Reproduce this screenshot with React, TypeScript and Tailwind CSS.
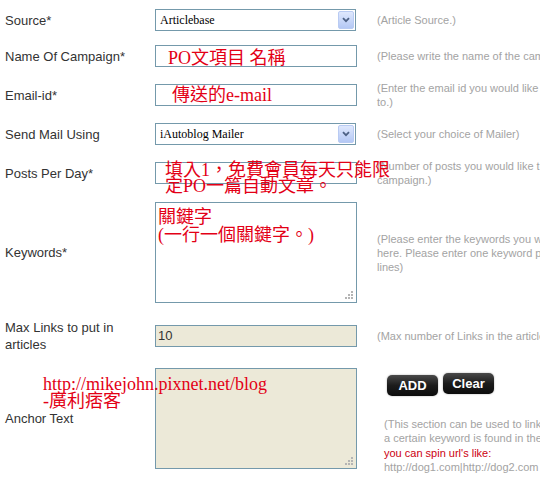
import React from "react";

const labelCls =
  "w-[155px] shrink-0 pl-[5px] pr-[20px] text-[13px] leading-[17px] text-[#333333]";
const helpCls =
  "ml-[20px] shrink-0 whitespace-nowrap text-[11px] leading-[14px] text-[#a3a3a3]";
const boxBorder = "border border-[#7499ab]";
const redCls =
  "absolute whitespace-nowrap text-[18px] text-[#e30016] pointer-events-none";
const redFont = { fontFamily: '"Liberation Serif", "Noto Sans CJK TC", serif' };

function Grip() {
  return (
    <svg
      className="absolute bottom-[2px] right-[2px]"
      width="10"
      height="10"
      viewBox="0 0 10 10"
    >
      {[
        [8, 2],
        [5, 5],
        [8, 5],
        [2, 8],
        [5, 8],
        [8, 8],
      ].map(([x, y], i) => (
        <rect key={i} x={x - 1} y={y - 1} width="2" height="2" fill="#b4b4b4" />
      ))}
    </svg>
  );
}

function SelectBox({ value }: { value: string }) {
  return (
    <div
      className={`relative flex h-[22px] w-[201px] shrink-0 items-center bg-white ${boxBorder}`}
    >
      <span
        className="pl-[4px] text-[12px] text-black"
        style={{ fontFamily: '"Liberation Serif", serif' }}
      >
        {value}
      </span>
      <div className="absolute right-[1px] top-[1px] flex h-[18px] w-[16px] items-center justify-center rounded-[2px] border border-[#b9cbf3] bg-gradient-to-b from-[#dfe8fd] to-[#b4c8f5]">
        <svg width="8" height="6" viewBox="0 0 8 6">
          <path
            d="M1 1.2 L4 4.2 L7 1.2"
            fill="none"
            stroke="#4d6185"
            strokeWidth="1.8"
          />
        </svg>
      </div>
    </div>
  );
}

function TextBox({ value, bg = "bg-white" }: { value?: string; bg?: string }) {
  return (
    <div className={`flex h-[22px] w-[202px] shrink-0 items-center ${bg} ${boxBorder}`}>
      {value && (
        <span
          className="pl-[2px] text-[13px] text-[#333333]"
          style={{ fontFamily: '"Liberation Sans", Arial, sans-serif' }}
        >
          {value}
        </span>
      )}
    </div>
  );
}

function TextArea({ bg = "bg-white" }: { bg?: string }) {
  return (
    <div className={`relative h-[101px] w-[202px] shrink-0 ${bg} ${boxBorder}`}>
      <Grip />
    </div>
  );
}

function Btn({ children, className = "" }: { children: React.ReactNode; className?: string }) {
  return (
    <div
      className={`flex h-[21px] w-[51px] items-center justify-center rounded-[5px] bg-gradient-to-b from-[#4a4a4a] via-[#1c1c1c] to-[#0c0c0c] text-[13px] font-bold text-white shadow-[0_0_2px_rgba(0,0,0,0.35)] ${className}`}
    >
      {children}
    </div>
  );
}

export default function App() {
  return (
    <div
      className="relative h-[480px] w-[540px] overflow-hidden bg-white"
      style={{ fontFamily: '"Liberation Sans", Arial, sans-serif' }}
    >
      <div className="flex flex-col pt-[9px]">
        {/* Source */}
        <div className="flex h-[22px] items-center">
          <div className={labelCls}>Source*</div>
          <SelectBox value="Articlebase" />
          <div className={`${helpCls} ml-[21px]`}>(Article Source.)</div>
        </div>

        {/* Name of campaign */}
        <div className="mt-[14px] flex h-[22px] items-center">
          <div className={labelCls}>Name Of Campaign*</div>
          <div className="relative shrink-0">
            <TextBox />
            <div className={`${redCls} left-[13px] top-[2px] leading-[22px]`} style={redFont}>
              PO文項目 名稱
            </div>
          </div>
          <div className={helpCls}>(Please write the name of the campaign.)</div>
        </div>

        {/* Email */}
        <div className="mt-[17px] flex h-[22px] items-center">
          <div className={labelCls}>Email-id*</div>
          <div className="relative shrink-0">
            <TextBox />
            <div className={`${redCls} left-[17px] top-[0px] leading-[22px]`} style={redFont}>
              傳送的e-mail
            </div>
          </div>
          <div className={helpCls}>
            (Enter the email id you would like the posts to be sent
            <br />
            to.)
          </div>
        </div>

        {/* Send mail using */}
        <div className="mt-[17px] flex h-[22px] items-center">
          <div className={labelCls}>Send Mail Using</div>
          <SelectBox value="iAutoblog Mailer" />
          <div className={`${helpCls} ml-[21px]`}>(Select your choice of Mailer)</div>
        </div>

        {/* Posts per day */}
        <div className="relative mt-[17px] flex h-[22px] items-center">
          <div className={labelCls}>Posts Per Day*</div>
          <TextBox />
          <div className={helpCls}>
            (Number of posts you would like to post per day for this
            <br />
            campaign.)
          </div>
          <div
            className={`${redCls} left-[165px] top-[0px] leading-[16px]`}
            style={redFont}
          >
            填入1，免費會員每天只能限
            <br />
            定PO一篇自動文章。
          </div>
        </div>

        {/* Keywords */}
        <div className="mt-[18px] flex h-[101px] items-center">
          <div className={labelCls}>Keywords*</div>
          <div className="relative shrink-0">
            <TextArea />
            <div className={`${redCls} left-[3px] top-[6px] leading-[18px]`} style={redFont}>
              關鍵字
              <br />
              (一行一個關鍵字。)
            </div>
          </div>
          <div className={helpCls}>
            (Please enter the keywords you want to target with this
            <br />
            here. Please enter one keyword per line, no blank
            <br />
            lines)
          </div>
        </div>

        {/* Max links */}
        <div className="mt-[22px] flex h-[22px] items-center">
          <div className={labelCls}>Max Links to put in articles</div>
          <TextBox value="10" bg="bg-[#ece9d8]" />
          <div className={helpCls}>(Max number of Links in the articles.)</div>
        </div>

        {/* Anchor text */}
        <div className="relative mt-[21px] flex h-[101px] items-center">
          <div className={labelCls}>Anchor Text</div>
          <TextArea bg="bg-[#ece9d8]" />
          <div className="ml-[27px] flex shrink-0 flex-col self-start pt-[5px]">
            <div className="ml-[3px] flex items-start gap-[5px]">
              <Btn className="mt-[2px]">ADD</Btn>
              <Btn>Clear</Btn>
            </div>
            <div className="mt-[21px] whitespace-nowrap text-[11px] leading-[14.3px] text-[#a3a3a3]">
              (This section can be used to link to a url when
              <br />
              a certain keyword is found in the article.
              <br />
              <span className="text-[#cc0010]">you can spin url's like:</span>
              <br />
              http://dog1.com|http://dog2.com
            </div>
          </div>
          <div className={`${redCls} left-[43px] top-[8px] leading-[17px]`} style={redFont}>
            http://mikejohn.pixnet.net/blog
            <br />
            -廣利痞客
          </div>
        </div>
      </div>
    </div>
  );
}
